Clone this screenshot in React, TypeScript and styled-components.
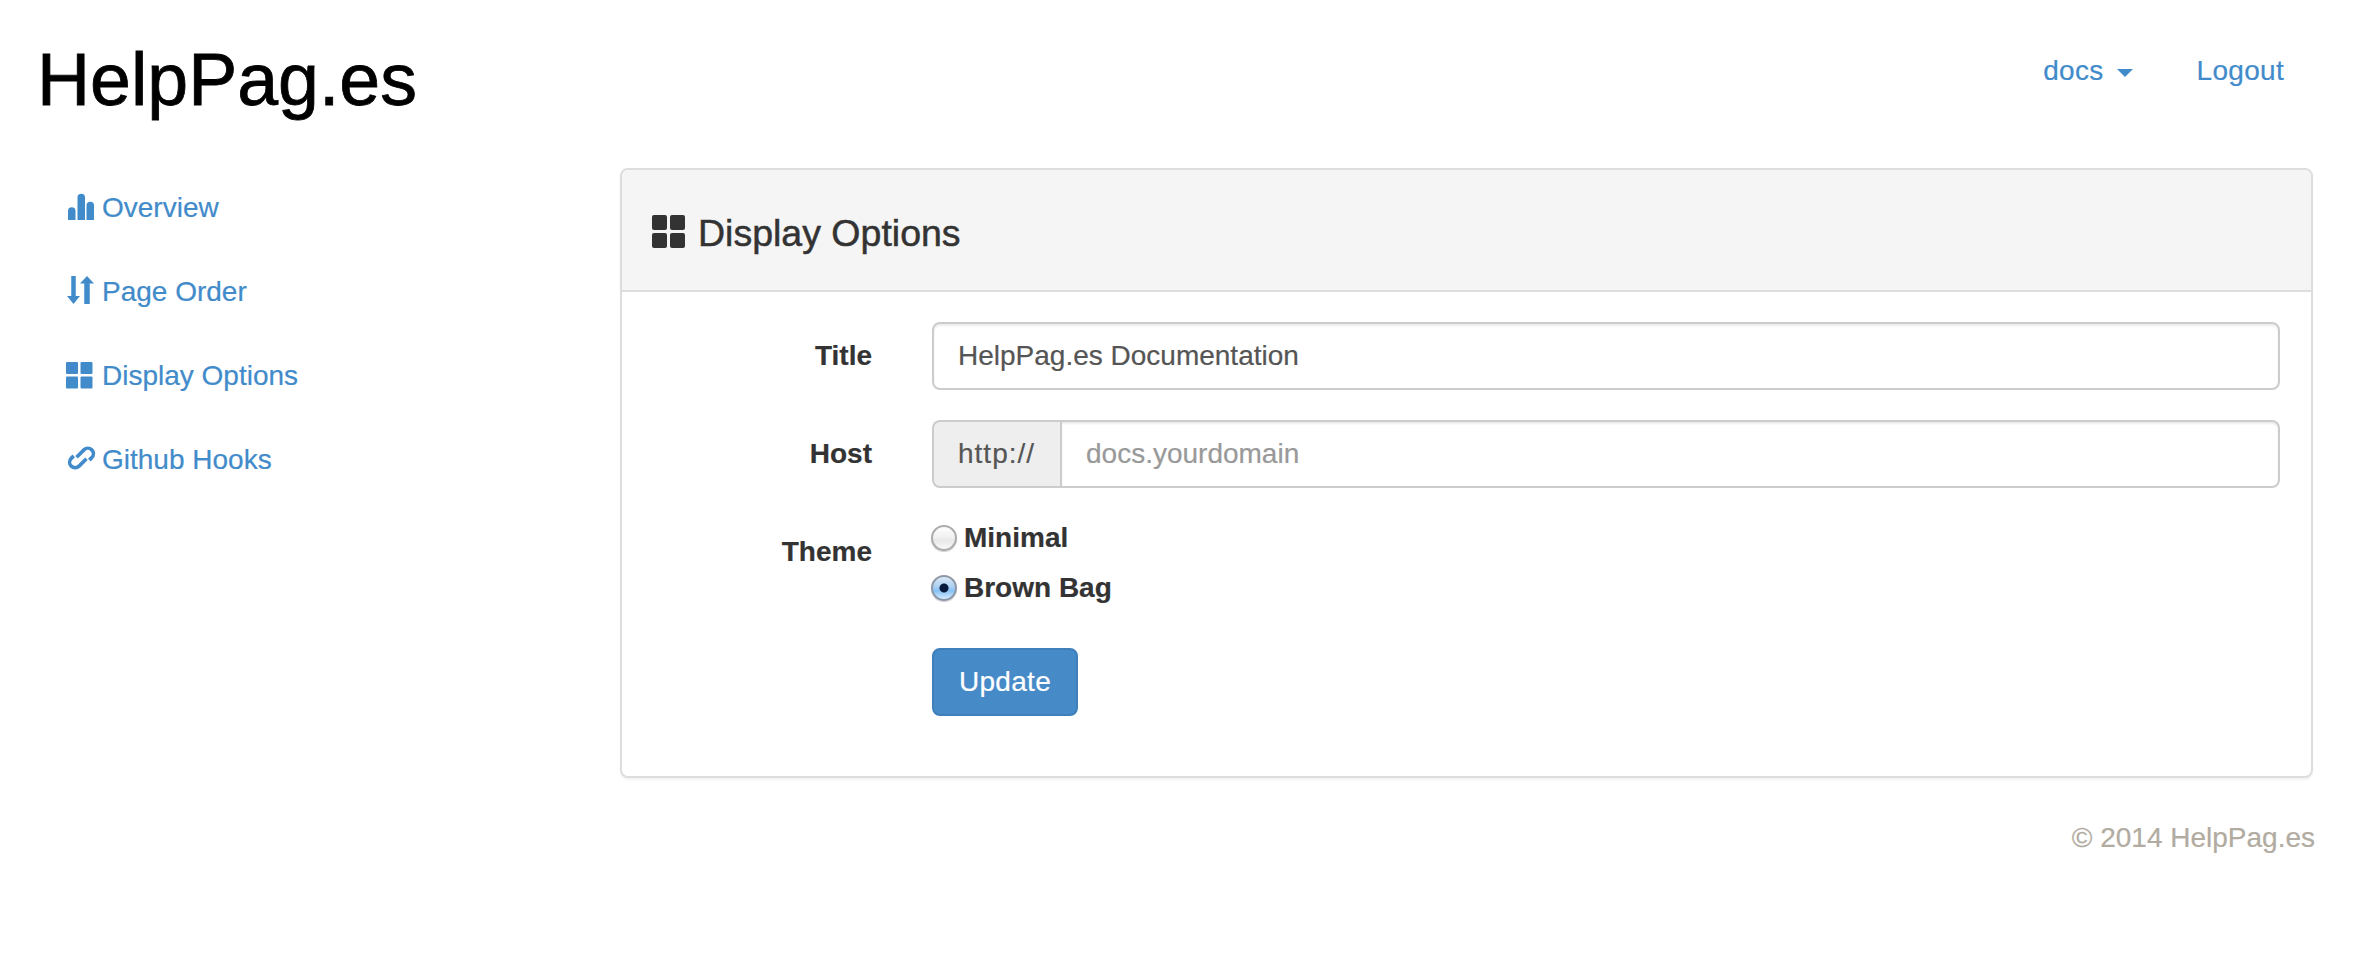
import styled, { createGlobalStyle } from 'styled-components';

const GlobalStyle = createGlobalStyle`
    html, body {
        margin: 0;
        padding: 0;
        background: #fff;
    }

    body {
        font-family: "Liberation Sans", Arial, sans-serif;
        font-size: 28px;
        line-height: 40px;
        color: #333;
        -webkit-text-stroke: 0.2px;
    }

    a {
        color: #428bca;
        text-decoration: none;
    }
`;

const StatsIcon = () => (
    <SideSvg viewBox="0 0 28 28">
        <path d="M2 28V19a3.750 3.750 0 0 1 7.500 0v9zM11.500 28V5.500a3.750 3.750 0 0 1 7.500 0V28zM20.500 28V13.500a3.750 3.750 0 0 1 7.500 0V28z" />
    </SideSvg>
);

const SortIcon = () => (
    <SideSvg viewBox="0 0 28 28">
        <path d="M5.250 0h4.500v20h4.250l-6.500 8L1 20h4.250zM21 0l7 7.500h-4.250V28h-5.500V7.500H14z" />
    </SideSvg>
);

const GridIcon = () => (
    <SideSvg viewBox="0 0 28 28">
        <rect x="0" y="2" width="12" height="12" rx="1" />
        <rect x="14.500" y="2" width="12" height="12" rx="1" />
        <rect x="0" y="16.500" width="12" height="12" rx="1" />
        <rect x="14.500" y="16.500" width="12" height="12" rx="1" />
    </SideSvg>
);

const LinkIcon = () => (
    <SideSvg viewBox="0 0 28 28">
        <g fill="none" stroke="currentColor" strokeWidth="3.600" transform="translate(1.500 0) rotate(45 14 14)">
            <path d="M10 17V6.500a5.500 5.500 0 0 1 11 0V10" />
            <path d="M18 11v10.500a5.500 5.500 0 0 1-11 0V18" />
        </g>
    </SideSvg>
);

const App = () => {
    return (
        <Page>
            <GlobalStyle />
            <Header>
                <Brand>HelpPag.es</Brand>
                <TopNav>
                    <a href="#docs">
                        docs<Caret />
                    </a>
                    <a href="#logout">Logout</a>
                </TopNav>
            </Header>
            <Main>
                <Sidebar>
                    <SideLink href="#overview">
                        <StatsIcon />
                        Overview
                    </SideLink>
                    <SideLink href="#order">
                        <SortIcon />
                        Page Order
                    </SideLink>
                    <SideLink href="#display">
                        <GridIcon />
                        Display Options
                    </SideLink>
                    <SideLink href="#hooks">
                        <LinkIcon />
                        Github Hooks
                    </SideLink>
                </Sidebar>
                <Content>
                    <Panel>
                        <PanelHeader>
                            <PanelIcon viewBox="0 0 33 33">
                                <rect x="0" y="0" width="15" height="15" rx="2" />
                                <rect x="18" y="0" width="15" height="15" rx="2" />
                                <rect x="0" y="18" width="15" height="15" rx="2" />
                                <rect x="18" y="18" width="15" height="15" rx="2" />
                            </PanelIcon>
                            <PanelTitle>Display Options</PanelTitle>
                        </PanelHeader>
                        <PanelBody>
                            <FormRow>
                                <FieldLabel>Title</FieldLabel>
                                <TextInput type="text" defaultValue="HelpPag.es Documentation" />
                            </FormRow>
                            <FormRow>
                                <FieldLabel>Host</FieldLabel>
                                <InputGroup>
                                    <Addon>http://</Addon>
                                    <GroupInput type="text" placeholder="docs.yourdomain" />
                                </InputGroup>
                            </FormRow>
                            <FormRow>
                                <FieldLabel>Theme</FieldLabel>
                                <RadioGroup>
                                    <RadioLabel>
                                        <Radio type="radio" name="theme" />
                                        Minimal
                                    </RadioLabel>
                                    <RadioLabel>
                                        <Radio type="radio" name="theme" defaultChecked />
                                        Brown Bag
                                    </RadioLabel>
                                </RadioGroup>
                            </FormRow>
                            <FormRow>
                                <span />
                                <UpdateButton type="button">Update</UpdateButton>
                            </FormRow>
                        </PanelBody>
                    </Panel>
                    <Footer>© 2014 HelpPag.es</Footer>
                </Content>
            </Main>
        </Page>
    );
};

export default App;

const Page = styled.div`
    width: 2380px;
    height: 974px;
    overflow: hidden;
`;

const Header = styled.header`
    display: flex;
    justify-content: space-between;
    box-sizing: border-box;
    height: 168px;
    padding: 0 96px 0 37px;
`;

const Brand = styled.h1`
    margin: 36px 0 0;
    font-size: 73.5px;
    font-weight: 400;
    line-height: 88px;
    color: #000;
    -webkit-text-stroke: 0.8px #000;
`;

const TopNav = styled.nav`
    display: flex;
    gap: 64px;
    height: 40px;
    padding-top: 51px;
    letter-spacing: 0.3px;
`;

const Caret = styled.span`
    display: inline-block;
    margin-left: 13px;
    vertical-align: middle;
    border-top: 8px solid #428bca;
    border-left: 8px solid transparent;
    border-right: 8px solid transparent;
`;

const Main = styled.main`
    display: flex;
`;

const Sidebar = styled.nav`
    display: flex;
    flex-direction: column;
    gap: 4px;
    box-sizing: border-box;
    width: 620px;
    padding-left: 66px;
`;

const SideLink = styled.a`
    display: flex;
    align-items: center;
    height: 40px;
    padding: 20px 0;
`;

const SideSvg = styled.svg`
    flex: none;
    width: 28px;
    height: 28px;
    margin: 0 8px 4px 0;
    fill: currentColor;
    overflow: visible;
`;

const Content = styled.div`
    flex: none;
    width: 1693px;
`;

const Panel = styled.section`
    box-sizing: border-box;
    height: 610px;
    border: 2px solid #ddd;
    border-radius: 8px;
    background: #fff;
    box-shadow: 0 2px 2px rgba(0, 0, 0, 0.05);
    overflow: hidden;
`;

const PanelHeader = styled.div`
    display: flex;
    align-items: center;
    box-sizing: border-box;
    height: 122px;
    padding: 0 30px;
    background: #f5f5f5;
    border-bottom: 2px solid #ddd;
`;

const PanelIcon = styled.svg`
    width: 33px;
    height: 33px;
    margin: 3px 13px 0 0;
    fill: #333;
`;

const PanelTitle = styled.h3`
    margin: 6px 0 0;
    font-size: 37.5px;
    font-weight: 400;
    line-height: 44px;
    color: #333;
    -webkit-text-stroke: 0.5px #333;
`;

const PanelBody = styled.form`
    display: flex;
    flex-direction: column;
    gap: 30px;
    padding: 30px 31px 0 0;
`;

const FormRow = styled.div`
    display: grid;
    grid-template-columns: 250px 1fr;
    column-gap: 60px;
    align-items: start;
`;

const FieldLabel = styled.label`
    padding-top: 14px;
    font-weight: 700;
    line-height: 40px;
    text-align: right;
`;

const TextInput = styled.input`
    box-sizing: border-box;
    width: 100%;
    height: 68px;
    padding: 12px 24px;
    border: 2px solid #ccc;
    border-radius: 8px;
    background: #fff;
    box-shadow: inset 0 2px 2px rgba(0, 0, 0, 0.075);
    color: #555;
    font: inherit;
    outline: none;

    &::placeholder {
        color: #999;
        opacity: 1;
    }
`;

const InputGroup = styled.div`
    display: flex;
`;

const Addon = styled.span`
    display: flex;
    align-items: center;
    flex: none;
    box-sizing: border-box;
    width: 128px;
    height: 68px;
    padding: 0 0 0 24px;
    border: 2px solid #ccc;
    border-right: 0;
    border-radius: 8px 0 0 8px;
    background: #eee;
    color: #555;
    letter-spacing: 1px;
`;

const GroupInput = styled(TextInput)`
    flex: 1;
    width: auto;
    border-radius: 0 8px 8px 0;
`;

const RadioGroup = styled.div`
    display: flex;
    flex-direction: column;
    gap: 10px;
    margin-bottom: 10px;
`;

const RadioLabel = styled.label`
    display: flex;
    align-items: center;
    height: 40px;
    font-weight: 700;
`;

const Radio = styled.input`
    appearance: none;
    flex: none;
    box-sizing: border-box;
    width: 26px;
    height: 26px;
    margin: 0 7px 0 -1px;
    border: 2px solid #ababab;
    border-radius: 50%;
    background: linear-gradient(#fdfdfd 0%, #f2f2f2 45%, #e8e8e8 60%, #f8f8f8 100%);
    box-shadow: 0 1px 1px rgba(0, 0, 0, 0.2);
    outline: none;

    &:checked {
        border-color: #8c97a8;
        background: radial-gradient(circle at center, #071a3c 0 4px, transparent 5px),
            linear-gradient(#dbe8f6 0%, #a9cff3 45%, #86c0f3 62%, #d3ecff 100%);
    }
`;

const UpdateButton = styled.button`
    box-sizing: border-box;
    width: 146px;
    height: 68px;
    padding: 0;
    border: 2px solid #3f7fba;
    border-radius: 8px;
    background: #468ac8;
    color: #fff;
    font: inherit;
    letter-spacing: 0.3px;
`;

const Footer = styled.footer`
    margin-top: 40px;
    margin-right: -2px;
    color: #b2aba1;
    line-height: 40px;
    text-align: right;
`;
